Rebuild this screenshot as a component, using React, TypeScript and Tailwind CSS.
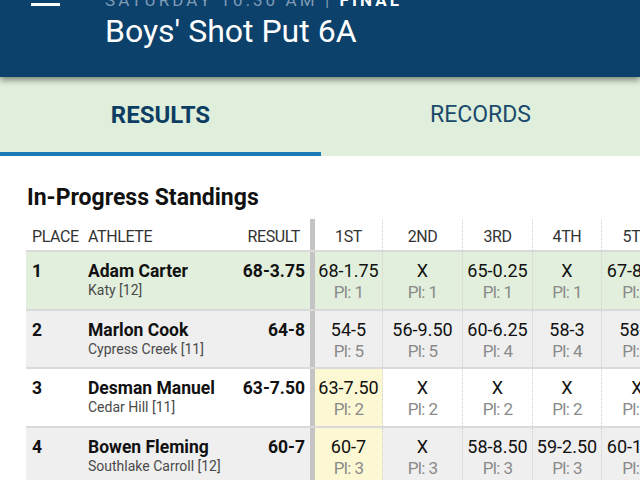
import React from "react";

type Cell = { v: string; pl: string; y?: boolean };
type Row = { place: string; name: string; school: string; result: string; bg: string; cells: Cell[] };

const rows: Row[] = [
  {
    place: "1",
    name: "Adam Carter",
    school: "Katy [12]",
    result: "68-3.75",
    bg: "bg-[#e1efdc]",
    cells: [
      { v: "68-1.75", pl: "Pl: 1" },
      { v: "X", pl: "Pl: 1" },
      { v: "65-0.25", pl: "Pl: 1" },
      { v: "X", pl: "Pl: 1" },
      { v: "67-8.25", pl: "Pl: 1" },
    ],
  },
  {
    place: "2",
    name: "Marlon Cook",
    school: "Cypress Creek [11]",
    result: "64-8",
    bg: "bg-[#efefef]",
    cells: [
      { v: "54-5", pl: "Pl: 5" },
      { v: "56-9.50", pl: "Pl: 5" },
      { v: "60-6.25", pl: "Pl: 4" },
      { v: "58-3", pl: "Pl: 4" },
      { v: "58-5", pl: "Pl: 4" },
    ],
  },
  {
    place: "3",
    name: "Desman Manuel",
    school: "Cedar Hill [11]",
    result: "63-7.50",
    bg: "bg-white",
    cells: [
      { v: "63-7.50", pl: "Pl: 2", y: true },
      { v: "X", pl: "Pl: 2" },
      { v: "X", pl: "Pl: 2" },
      { v: "X", pl: "Pl: 2" },
      { v: "X", pl: "Pl: 2" },
    ],
  },
  {
    place: "4",
    name: "Bowen Fleming",
    school: "Southlake Carroll [12]",
    result: "60-7",
    bg: "bg-[#efefef]",
    cells: [
      { v: "60-7", pl: "Pl: 3", y: true },
      { v: "X", pl: "Pl: 3" },
      { v: "58-8.50", pl: "Pl: 3" },
      { v: "59-2.50", pl: "Pl: 3" },
      { v: "60-1.25", pl: "Pl: 3" },
    ],
  },
];

const colW = ["w-[68px]", "w-[80px]", "w-[70px]", "w-[69px]", "w-[71px]"];
const heads = ["1ST", "2ND", "3RD", "4TH", "5TH"];

export default function App() {
  return (
    <div className="w-[640px] h-[480px] overflow-hidden bg-white font-['Roboto',sans-serif] text-[#111]">
      {/* App bar */}
      <div className="relative z-10 h-[77px] bg-[#0b416b] shadow-[0_3px_6px_rgba(0,0,0,0.45)] flex items-start pl-[31px]">
        <div className="mt-[-13px] flex flex-col gap-[5px]">
          <div className="h-[3px] w-[29px] bg-white" />
          <div className="h-[3px] w-[29px] bg-white" />
          <div className="h-[3px] w-[29px] bg-white" />
        </div>
        <div className="ml-[45px] mt-[-10px] flex flex-col">
          <div className="text-[17px] leading-[20px] tracking-[3.1px] text-[#7f9ab5] whitespace-nowrap">
            SATURDAY 10:30 AM | <span className="font-bold text-white">FINAL</span>
          </div>
          <div className="mt-[3px] text-[32px] leading-[36px] text-white whitespace-nowrap">Boys' Shot Put 6A</div>
        </div>
      </div>

      {/* Tabs */}
      <div className="h-[79px] bg-[#dfefdb] flex">
        <div className="w-[321px] flex flex-col">
          <div className="flex-1 flex items-center justify-center text-[24px] font-bold text-[#0d3d62]">RESULTS</div>
          <div className="h-[4px] bg-[#1b78b9]" />
        </div>
        <div className="flex-1 flex flex-col">
          <div className="flex-1 flex items-center justify-center pt-[2px] text-[23px] text-[#1a4a6c]">RECORDS</div>
          <div className="h-[4px]" />
        </div>
      </div>

      {/* Standings */}
      <div className="pl-[26px] pt-[30px]">
        <div className="pl-[1px] text-[23px] leading-[24px] font-bold text-[#111]">In-Progress Standings</div>
        <div className="mt-[9px] w-[800px]">
          {/* Header row */}
          <div className="flex h-[33px] border-b-2 border-[#dadada] text-[16px] leading-[20px] tracking-[-0.4px] text-[#333]">
            <div className="w-[284px] flex pt-[8px]">
              <div className="w-[62px] pl-[6px]">PLACE</div>
              <div className="flex-1">ATHLETE</div>
              <div className="pr-[10px]">RESULT</div>
            </div>
            <div className="w-[5px] bg-[#c4c4c4]" />
            {heads.map((h, i) => (
              <div key={h} className={`${colW[i]} border-r border-dotted border-[#cfcfcf] pt-[8px] text-center`}>
                {h}
              </div>
            ))}
          </div>
          {rows.map((r) => (
            <div key={r.place} className={`flex h-[58.5px] border-b-2 border-[#dadada] ${r.bg}`}>
              <div className="w-[284px] flex pt-[9px]">
                <div className="w-[62px] pl-[6px] text-[17.5px] leading-[20px] font-bold">{r.place}</div>
                <div className="flex-1 flex flex-col">
                  <div className="text-[17.5px] leading-[20px] font-bold whitespace-nowrap">{r.name}</div>
                  <div className="text-[14px] leading-[18px] text-[#4a4a4a] whitespace-nowrap">{r.school}</div>
                </div>
                <div className="pr-[5px] text-[17.5px] leading-[20px] font-bold text-right">{r.result}</div>
              </div>
              <div className="w-[5px] bg-[#c4c4c4]" />
              {r.cells.map((c, i) => (
                <div
                  key={i}
                  className={`${colW[i]} border-r border-dotted border-[#cfcfcf] pt-[9px] flex flex-col items-center ${c.y ? "bg-[#fcf8d3]" : ""}`}
                >
                  <div className="text-[18px] leading-[20px] whitespace-nowrap">{c.v}</div>
                  <div className="mt-[1px] text-[17px] leading-[20px] tracking-[-0.6px] text-[#8a8a8a] whitespace-nowrap">{c.pl}</div>
                </div>
              ))}
            </div>
          ))}
        </div>
      </div>
    </div>
  );
}
